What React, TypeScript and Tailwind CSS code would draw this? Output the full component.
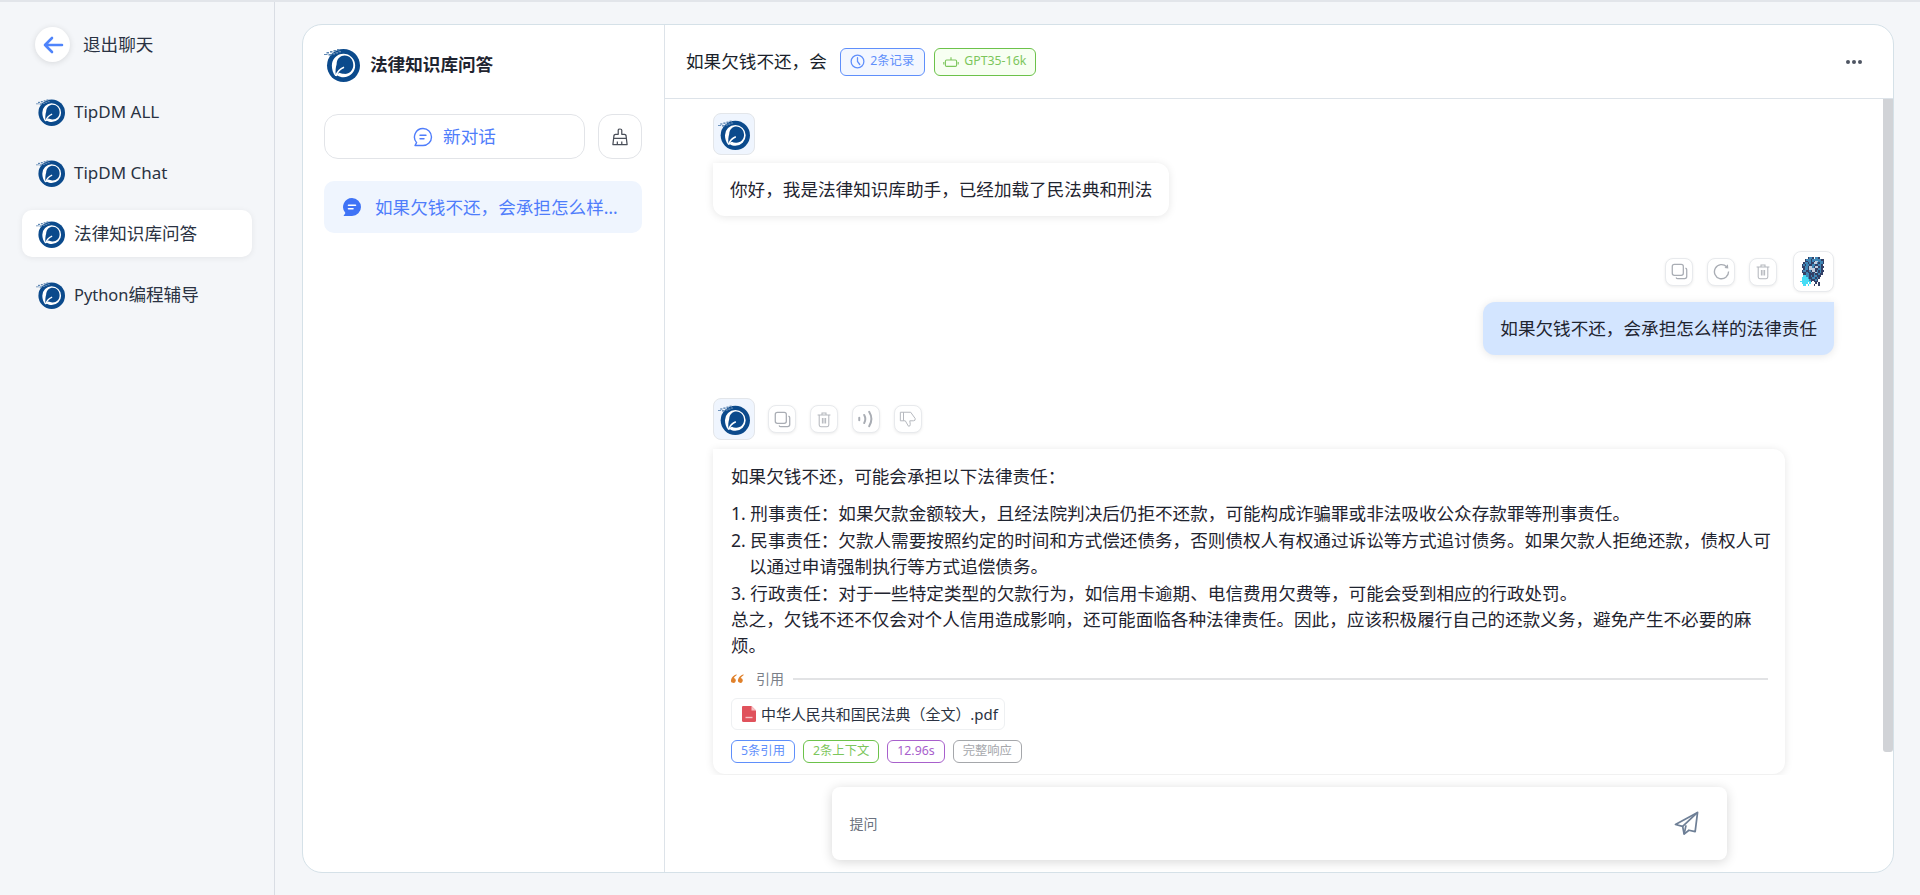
import React from "react";

const C = "\uFF0C";
const M = "\uFF1A";

function Logo({ className }: { className?: string }) {
  return (
    <svg viewBox="0 0 36 36" className={className}>
      <g transform="translate(19.5 19.5) scale(1.1) translate(-20.5 -20)">
        <circle cx="20.5" cy="20" r="15" fill="#0b4a8c" />
        <path d="M13 29.5 C11 27 9.9 23.5 9.9 20 A10.6 10.6 0 0 1 31.1 20 A10.6 10.6 0 0 1 20.5 30.6 C18.4 30.6 16.6 30 15 29 C14.2 29.3 13.6 29.5 13 29.5 Z" fill="#fff" />
        <path d="M13.5 28.5 C13 25 13.4 21.5 14.2 19 C14.4 13.5 18 11 21.5 11 C26.2 11 29.4 14.8 29.4 19.5 C29.4 24.5 25.6 28 21 27.6 C19.4 27.5 18 27 17 26.5 C15.8 27 14.6 27.6 13.5 28.5 Z" fill="#0b4a8c" />
        <path d="M13.5 29.5 C15 25.5 17 23 21 21.5" fill="none" stroke="#fff" strokeWidth="1.5" />
      </g>
      <g fill="#5f88b4">
        <rect x="0" y="8" width="3.5" height="1" />
        <rect x="2.5" y="6" width="2.5" height="1.5" />
        <rect x="4.5" y="8" width="3" height="1.6" />
        <rect x="6" y="5" width="2.5" height="1.6" />
        <rect x="8.5" y="7" width="2.5" height="1.6" />
        <rect x="9.5" y="4" width="2.5" height="1.6" />
        <rect x="11.5" y="6" width="2.5" height="1.6" />
        <rect x="13" y="3" width="2.5" height="1.6" />
        <rect x="14.5" y="5" width="2.5" height="1.4" />
      </g>
    </svg>
  );
}

function Pixel() {
  const px = [
    ".....#bb#.bb#.....",
    "...#bbb#bbbbbb##..",
    "...##bb#b#wwbbb#..",
    "..#bb#b##wwb#bb#..",
    ".#b#bb##bb##bb#...",
    ".##bb#wwb#ww#b##..",
    "..#bb#wwww##bb#...",
    ".#bb##b#ww#b#b##..",
    ".###b##b##wb#b#...",
    "..##bb###b##b##...",
    "..ccbb#b#bb###....",
    ".ccccb##bb#b#.....",
    ".cccccb###b#......",
    "ccccccc#.###......",
    ".cccc.c...#.#.....",
    "..cc.c...#..#.....",
  ];
  const colors: Record<string, string> = { "#": "#334066", b: "#3f86b5", c: "#45dcf5", w: "#c3cede" };
  return (
    <svg viewBox="0 0 18 16" className="w-[27px] h-[29px]" preserveAspectRatio="none" shapeRendering="crispEdges">
      {px.flatMap((row, y) =>
        row.split("").map((c, x) => (c === "." ? null : <rect key={x + "-" + y} x={x} y={y} width="1" height="1" fill={colors[c]} />))
      )}
    </svg>
  );
}

const Copy = () => (
  <svg viewBox="0 0 20 20" className="w-[17px] h-[17px]" fill="none" stroke="#a9adb4" strokeWidth="1.5">
    <rect x="1.5" y="1.5" width="13" height="13" rx="2.5" />
    <path d="M17 6 Q18.5 6.5 18.5 8 L18.5 16 Q18.5 18.5 16 18.5 L8 18.5 Q6.5 18.5 6 17" />
  </svg>
);
const Trash = () => (
  <svg viewBox="0 0 20 20" className="w-[16px] h-[17px]" fill="none" stroke="#b4b7bd" strokeWidth="1.3">
    <path d="M2 4.5 H18 M7.5 4 V2 H12.5 V4 M4 4.5 V17 Q4 19 6 19 H14 Q16 19 16 17 V4.5 M8 8 V15 M10 8 V15 M12 8 V15" />
  </svg>
);
const Refresh = () => (
  <svg viewBox="0 0 20 20" className="w-[17px] h-[17px]" fill="none" stroke="#a9adb4" strokeWidth="1.6">
    <path d="M16 4.5 A8.3 8.3 0 1 0 18.3 10" />
    <path d="M13.5 6 L18 6.5 L17.5 1.5 Z" fill="#a9adb4" stroke="none" />
  </svg>
);
const Voice = () => (
  <svg viewBox="0 0 20 20" className="w-[18px] h-[18px]" fill="none" stroke="#a9adb4" strokeWidth="2.2" strokeLinecap="round">
    <path d="M2.5 8.5 V11.5" />
    <path d="M8 5.5 Q10.5 10 8 14.5" />
    <path d="M13.5 2 Q18.5 10 13.5 18" />
  </svg>
);
const Dislike = () => (
  <svg viewBox="0 0 20 20" className="w-[18px] h-[18px]" fill="none" stroke="#b4b7bd" strokeWidth="1.1" strokeLinejoin="round">
    <path d="M1.5 2.5 H13 L18 9.5 Q18.5 12 16 12 H12 L12.5 16 Q12.5 18.5 10.5 18 L7 12 H5 V2.5 M5 12 H1.5 V2.5" />
  </svg>
);

function ActionBtn({ children }: { children: React.ReactNode }) {
  return (
    <div className="w-[28px] h-[28px] flex items-center justify-center rounded-[8px] bg-white border border-[#e8eaed] shadow-[0_1px_3px_rgba(0,0,0,0.08)]">
      {children}
    </div>
  );
}

function Tag({ c, children }: { c: string; children: React.ReactNode }) {
  return <div className={`h-[23px] px-[9px] flex items-center rounded-[6px] border text-[12.32px] ${c}`}>{children}</div>;
}

function NavItem({ children, active }: { children: React.ReactNode; active?: boolean }) {
  return (
    <div className={`h-[47px] flex items-center pl-[14px] rounded-[10px] ${active ? "bg-white shadow-[0_1px_6px_rgba(0,0,0,0.07)]" : ""}`}>
      <Logo className="w-[29px] h-[29px] shrink-0" />
      <span className="ml-[9px] text-[17.6px] text-[#2a3242]">{children}</span>
    </div>
  );
}

export default function App() {
  return (
    <div
      className="w-full h-[895px] flex overflow-hidden bg-[#f4f6f9] border-t-2 border-[#e2e5ea] text-[#1f2430]"
      style={{ fontFamily: '"Noto Sans", "Noto Sans CJK SC", sans-serif' }}
    >
      <aside className="w-[275px] shrink-0 border-r border-[#d9dde4] px-[22px]">
        <div className="h-[86px] pl-[13px] pt-[25px]">
          <div className="flex items-center">
            <div className="w-[35px] h-[35px] rounded-full bg-white shadow-[0_1px_6px_rgba(0,0,0,0.12)] flex items-center justify-center">
              <svg viewBox="0 0 24 24" className="w-[24px] h-[24px]" fill="none" stroke="#4f84fb" strokeWidth="2.6" strokeLinecap="round" strokeLinejoin="round">
                <path d="M21 12 H4 M11 5 L4 12 L11 19" />
              </svg>
            </div>
            <span className="ml-[13px] text-[17.6px] text-[#2a3242]">退出聊天</span>
          </div>
        </div>
        <div className="flex flex-col gap-[14px]">
          <NavItem><span className="text-[17px]">TipDM ALL</span></NavItem>
          <NavItem><span className="text-[17px]">TipDM Chat</span></NavItem>
          <NavItem active>法律知识库问答</NavItem>
          <NavItem><span className="text-[16.4px]">Python</span>编程辅导</NavItem>
        </div>
      </aside>

      <main className="flex-1 pl-[27px] pr-[26px] pt-[22px] pb-[22px] min-w-0">
        <div className="h-full bg-white border border-[#d5e1e8] rounded-[20px] flex overflow-hidden">
          <section className="w-[362px] shrink-0 border-r border-[#dde3e9] pl-[21px]">
            <div className="h-[78px] mb-[11px] flex items-center">
              <Logo className="w-[36px] h-[36px] shrink-0" />
              <span className="ml-[10px] text-[17.6px] font-semibold text-[#1f2430]">法律知识库问答</span>
            </div>
            <div className="flex gap-[13px]">
              <div className="w-[261px] h-[45px] border border-[#e2e4e8] rounded-[14px] flex items-center justify-center gap-[10px] text-[#4f7dfb] text-[17.6px]">
                <svg viewBox="0 0 20 20" className="w-[20px] h-[20px]" fill="none" stroke="#4f7dfb" strokeWidth="1.4" strokeLinecap="round">
                  <path d="M10 1.5 A8.5 8.5 0 1 1 10 18.5 H2 L3.6 15.6 A8.5 8.5 0 0 1 10 1.5 Z" strokeLinejoin="round" />
                  <path d="M7 8.2 H13 M7 11.8 H11" />
                </svg>
                新对话
              </div>
              <div className="w-[44px] h-[45px] border border-[#e2e4e8] rounded-[14px] flex items-center justify-center">
                <svg viewBox="0 0 18 20" className="w-[16px] h-[18px]" fill="none" stroke="#4a4f59" strokeWidth="1.4" strokeLinejoin="round">
                  <path d="M7 7 V2.5 Q7 1 9 1 Q11 1 11 2.5 V7 H14 Q16 7 16 10 L17 18.5 H1 L2 10 Q2 7 4 7 Z" />
                  <path d="M2 11.5 H16 M6 15 V18.5 M11 15 V18.5" />
                </svg>
              </div>
            </div>
            <div className="mt-[22px] w-[318px] h-[52px] rounded-[10px] bg-[#eff5fe] flex items-center pl-[18px] pr-[24px] text-[#4f7dfb] text-[17.6px]">
              <svg viewBox="0 0 20 20" className="w-[20px] h-[20px] shrink-0" fill="#3f73f6">
                <path d="M10 1 A9 9 0 1 1 10 19 H1.5 L3.4 16 A9 9 0 0 1 10 1 Z" />
                <path d="M6.5 8.2 H13.5 M6.5 11.8 H11" stroke="#fff" strokeWidth="1.6" strokeLinecap="round" />
              </svg>
              <span className="ml-[13px] truncate">{"如果欠钱不还" + C + "会承担怎么样的法律责任"}</span>
            </div>
          </section>

          <section className="flex-1 min-w-0 flex flex-col">
            <header className="h-[74px] shrink-0 border-b border-[#dde3e9] flex items-center pl-[21px] pr-[31px]">
              <span className="text-[17.6px] text-[#1a1f2b]">{"如果欠钱不还" + C + "会"}</span>
              <div className="ml-[13px] w-[85px] h-[28px] rounded-[6px] border border-[#5f8ffb] bg-[#f3f7ff] flex items-center justify-center gap-[5px] text-[12.32px] text-[#5f8ffb]">
                <svg viewBox="0 0 20 20" className="w-[15px] h-[15px]" fill="none" stroke="#5f8ffb" strokeWidth="1.7" strokeLinecap="round">
                  <circle cx="10" cy="10" r="8.5" />
                  <path d="M10 5 V10 L13 14" />
                </svg>
                2条记录
              </div>
              <div className="ml-[9px] w-[102px] h-[28px] rounded-[6px] border border-[#6cc24a] bg-[#f7fff2] flex items-center justify-center gap-[5px] text-[12.32px] text-[#7cc65c]">
                <svg viewBox="0 0 20 20" className="w-[16px] h-[16px]" fill="none" stroke="#7cc65c" strokeWidth="1.4">
                  <rect x="3" y="7.5" width="14" height="8" rx="1.5" />
                  <path d="M10 7.5 V4 M1 10 V13 M19 10 V13" />
                </svg>
                GPT35-16k
              </div>
              <div className="ml-auto flex gap-[2px]">
                <span className="w-[4px] h-[4px] rounded-full bg-[#4f5563]" />
                <span className="w-[4px] h-[4px] rounded-full bg-[#4f5563]" />
                <span className="w-[4px] h-[4px] rounded-full bg-[#4f5563]" />
              </div>
            </header>

            <div className="flex-1 min-h-0 flex">
              <div className="flex-1 min-w-0 overflow-hidden pl-[48px] pr-[49px] pt-[14px] text-[17.6px] text-[#1f2430] leading-[26.4px]">
                <div className="w-[42px] h-[42px] rounded-[8px] bg-[#eff5fe] border border-[#e3e6ea] flex items-center justify-center">
                  <Logo className="w-[32px] h-[32px]" />
                </div>
                <div className="mt-[8px] w-fit h-[53px] px-[17px] flex items-center bg-white rounded-b-[12px] rounded-tr-[12px] shadow-[0_1px_8px_rgba(0,0,0,0.1)]">
                  {"你好" + C + "我是法律知识库助手" + C + "已经加载了民法典和刑法"}
                </div>

                <div className="mt-[35px] flex items-center justify-end">
                  <div className="flex gap-[14px] mr-[16px]">
                    <ActionBtn><Copy /></ActionBtn>
                    <ActionBtn><Refresh /></ActionBtn>
                    <ActionBtn><Trash /></ActionBtn>
                  </div>
                  <div className="w-[41px] h-[41px] rounded-[8px] bg-white border border-[#e8eaed] shadow-[0_1px_3px_rgba(0,0,0,0.06)] flex items-center justify-center">
                    <Pixel />
                  </div>
                </div>
                <div className="mt-[10px] ml-auto w-fit h-[53px] px-[17px] flex items-center bg-[#d3e5ff] rounded-b-[12px] rounded-tl-[12px] shadow-[0_1px_8px_rgba(0,0,0,0.1)]">
                  {"如果欠钱不还" + C + "会承担怎么样的法律责任"}
                </div>

                <div className="mt-[43px] flex items-center">
                  <div className="w-[42px] h-[42px] rounded-[8px] bg-[#eff5fe] border border-[#e3e6ea] flex items-center justify-center">
                    <Logo className="w-[32px] h-[32px]" />
                  </div>
                  <div className="ml-[13px] flex gap-[14px]">
                    <ActionBtn><Copy /></ActionBtn>
                    <ActionBtn><Trash /></ActionBtn>
                    <ActionBtn><Voice /></ActionBtn>
                    <ActionBtn><Dislike /></ActionBtn>
                  </div>
                </div>

                <div className="mt-[9px] w-[1072px] h-[325px] pl-[18px] pr-[17px] pt-[14px] bg-white rounded-b-[12px] rounded-tr-[12px] shadow-[0_1px_8px_rgba(0,0,0,0.1)]">
                  <p>{"如果欠钱不还" + C + "可能会承担以下法律责任" + M}</p>
                  <ol className="mt-[11px] -mr-[5px]">
                    <li className="pl-[18px] -indent-[18px]">{"1. 刑事责任" + M + "如果欠款金额较大" + C + "且经法院判决后仍拒不还款" + C + "可能构成诈骗罪或非法吸收公众存款罪等刑事责任。"}</li>
                    <li className="pl-[18px] -indent-[18px]">{"2. 民事责任" + M + "欠款人需要按照约定的时间和方式偿还债务" + C + "否则债权人有权通过诉讼等方式追讨债务。如果欠款人拒绝还款" + C + "债权人可以通过申请强制执行等方式追偿债务。"}</li>
                    <li className="pl-[18px] -indent-[18px]">{"3. 行政责任" + M + "对于一些特定类型的欠款行为" + C + "如信用卡逾期、电信费用欠费等" + C + "可能会受到相应的行政处罚。"}</li>
                  </ol>
                  <p>{"总之" + C + "欠钱不还不仅会对个人信用造成影响" + C + "还可能面临各种法律责任。因此" + C + "应该积极履行自己的还款义务" + C + "避免产生不必要的麻烦。"}</p>
                  <div className="mt-[9px] flex items-center h-[22px]">
                    <svg viewBox="0 0 14 10" className="w-[13px] h-[10px]" fill="#e0812b">
                      <path d="M6 0 Q1 2 0 6 A2.6 2.6 0 1 0 3 4 Q4 2 6 1 Z M13.5 0 Q8.5 2 7.5 6 A2.6 2.6 0 1 0 10.5 4 Q11.5 2 13.5 1 Z" />
                    </svg>
                    <span className="ml-[12px] text-[14px] text-[#7a7f88]">引用</span>
                    <div className="ml-[9px] flex-1 h-[2px] bg-[#e2e3e5]" />
                  </div>
                  <div className="mt-[8px] w-[274px] h-[32px] flex items-center pl-[10px] rounded-[6px] border border-[#eef0f2] text-[14.96px] text-[#2a3242]">
                    <svg viewBox="0 0 14 16" className="w-[14px] h-[16px] shrink-0" fill="#e0525c">
                      <path d="M1 0 H9.5 L14 4.5 V14.5 Q14 16 12.5 16 H1.5 Q0 16 0 14.5 V1 Q0 0 1 0 Z" />
                      <path d="M9.5 0 V4.5 H14 Z" fill="#f6c3c6" />
                      <path d="M3.5 11.5 H10.5" stroke="#f6c3c6" strokeWidth="1.4" />
                    </svg>
                    <span className="ml-[5px] whitespace-nowrap">{"中华人民共和国民法典\uFF08全文\uFF09.pdf"}</span>
                  </div>
                  <div className="mt-[10px] flex gap-[8px]">
                    <Tag c="border-[#5f8ffb] text-[#5f8ffb]">5条引用</Tag>
                    <Tag c="border-[#6cc24a] text-[#7cc65c]">2条上下文</Tag>
                    <Tag c="border-[#a860cc] text-[#a860cc]">12.96s</Tag>
                    <Tag c="border-[#a5a7ab] text-[#a5a7ab]">完整响应</Tag>
                  </div>
                </div>
              </div>
              <div className="w-[10px] shrink-0">
                <div className="h-[653px] bg-[#d1d3d7] rounded-b-[3px]" />
              </div>
            </div>

            <div className="h-[97px] shrink-0 flex justify-center pt-[12px]">
              <div className="w-[895px] h-[73px] rounded-[8px] bg-white shadow-[0_2px_12px_rgba(0,0,0,0.16)] flex items-center pl-[18px] pr-[28px] text-[14px] text-[#6b7280]">
                提问
                <svg viewBox="0 0 26 26" className="w-[25px] h-[25px] ml-auto" fill="none" stroke="#6e7f96" strokeWidth="1.8" strokeLinejoin="round">
                  <path d="M24.5 1.5 L1.5 14 L9 16 L10.5 24 L15.5 20 L22 21.5 Z" />
                  <path d="M24.5 1.5 L9 16 M10.5 24 L12.5 15" />
                </svg>
              </div>
            </div>
          </section>
        </div>
      </main>
    </div>
  );
}
